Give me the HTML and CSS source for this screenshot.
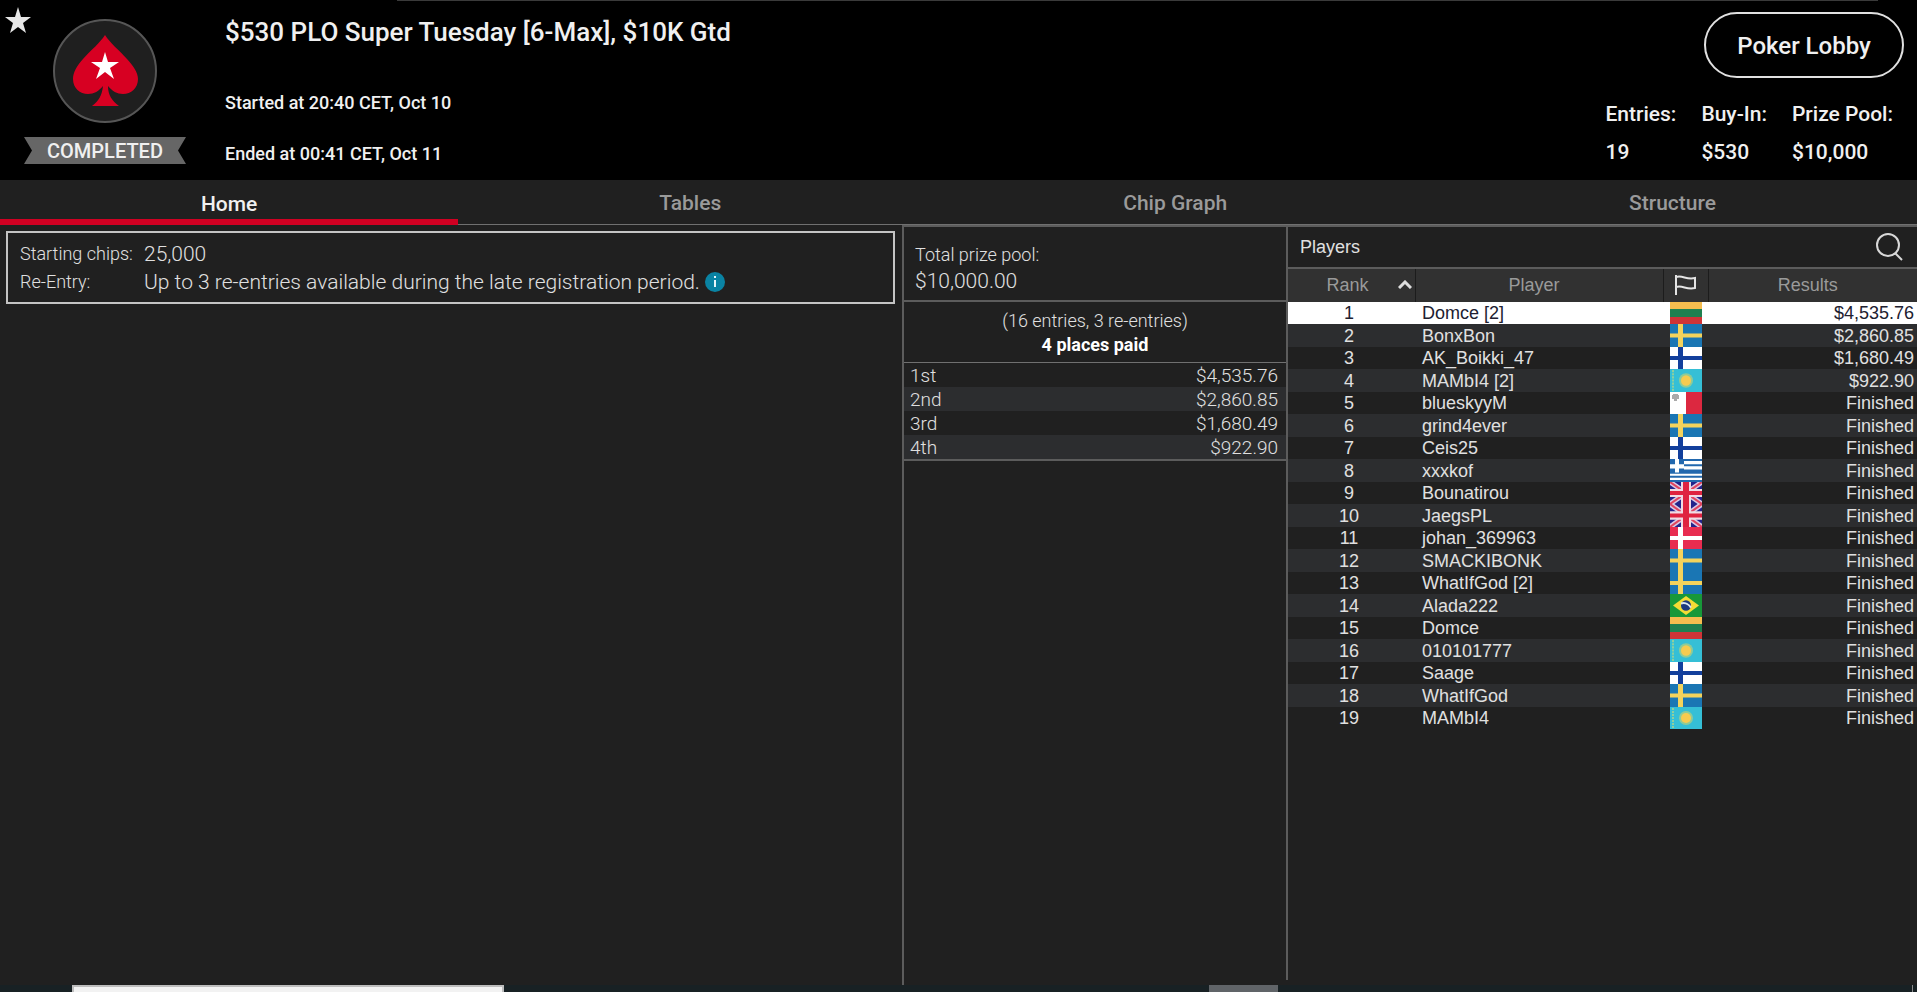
FILE: index.html
```html
<!DOCTYPE html>
<html lang="en">
<head>
<meta charset="utf-8">
<title>$530 PLO Super Tuesday [6-Max], $10K Gtd</title>
<link rel="stylesheet" href="styles.css">
</head>
<body>
<svg class="defs" aria-hidden="true">
  <symbol id="lt" viewBox="0 0 32 22" preserveAspectRatio="none"><path fill="#f5bd4f" d="M0 0h32v8H0z"/><path fill="#1f8050" d="M0 7h32v8H0z"/><path fill="#cf3437" d="M0 15h32v7H0z"/></symbol>
  <symbol id="se" viewBox="0 0 32 22" preserveAspectRatio="none"><path fill="#1a76b4" d="M0 0h32v22H0z"/><path fill="#f3d35c" d="M8 0h5v22H8zM0 9h32v4H0z"/></symbol>
  <symbol id="fi" viewBox="0 0 32 22" preserveAspectRatio="none"><path fill="#fff" d="M0 0h32v22H0z"/><path fill="#123f9c" d="M8 0h5v22H8zM0 9h32v4H0z"/></symbol>
  <symbol id="kz" viewBox="0 0 32 22" preserveAspectRatio="none"><path fill="#35bfd6" d="M0 0h32v22H0z"/><path stroke="#8fcf9e" stroke-width="2" stroke-dasharray="2 1" d="M3 1v20"/><circle cx="16" cy="11" r="7" fill="#8ecb98"/><circle cx="16" cy="11" r="5" fill="#f6cb50"/></symbol>
  <symbol id="mt" viewBox="0 0 32 22" preserveAspectRatio="none"><path fill="#fff" d="M0 0h16v22H0z"/><path fill="#dc2840" d="M16 0h16v22H16z"/><path fill="#aaa" d="M3 2h5v1h1v4H7v2H4V7H2V3h1z"/></symbol>
  <symbol id="gr" viewBox="0 0 32 22" preserveAspectRatio="none"><path fill="#2268ae" d="M0 0h32v22H0z"/><path fill="#fff" d="M14 2h18v3H14zM14 7h18v3H14zM0 14h32v2H0zM0 18h32v2H0zM5 0h4v13H5zM0 5h14v4H0z"/></symbol>
  <symbol id="gb" viewBox="0 0 32 22" preserveAspectRatio="none"><path fill="#23238a" d="M0 0h32v22H0z"/><path stroke="#d9c8e4" stroke-width="5" d="M0 0l32 22M32 0L0 22"/><path stroke="#e0445f" stroke-width="2" d="M0 0l32 22M32 0L0 22"/><path fill="#f0dbe4" d="M11 0h10v22H11zM0 7h32v8H0z"/><path fill="#df2340" d="M13 0h6v22h-6zM0 9h32v4H0z"/></symbol>
  <symbol id="dk" viewBox="0 0 32 22" preserveAspectRatio="none"><path fill="#e82c50" d="M0 0h32v22H0z"/><path fill="#fff" d="M8 0h5v22H8zM0 9h32v4H0z"/></symbol>
  <symbol id="br" viewBox="0 0 32 22" preserveAspectRatio="none"><path fill="#179839" d="M0 0h32v22H0z"/><path fill="#f3dc35" d="M16 2l13 9-13 9L3 11z"/><circle cx="16" cy="11" r="5" fill="#1d3a7e"/><path fill="none" stroke="#d9e6ee" stroke-width="2" d="M11 9c4-1 8 1 10 4"/></symbol>
</svg>

<header class="top">
  <div class="brand">
    <svg class="fav" viewBox="0 0 26 26"><path fill="#e6e6e6" d="M13 0l3 10h10l-8 6 3 10-8-6-8 6 3-10-8-6h10z"/></svg>
    <svg class="logo" viewBox="0 0 106 106"><circle cx="53" cy="53" r="51" fill="#1f1f1f" stroke="#565656" stroke-width="2"/><path fill="#d70022" d="M53 17c5 8 14 15 22 24 6 7 11 13 11 20 0 9-7 15-15 15-6 0-11-3-15-8 0 9 4 15 11 20H40c7-5 10-11 11-20-4 5-9 8-15 8-8 0-15-6-15-15 0-7 4-13 10-20 8-9 17-16 22-24z"/><path fill="#fff" d="M53 34l3 10h11l-9 6 4 11-9-7-9 7 4-11-9-6h11z"/></svg>
    <div class="ribbon">COMPLETED</div>
  </div>
  <div class="event">
    <h1>$530 PLO Super Tuesday [6-Max], $10K Gtd</h1>
    <p>Started at 20:40 CET, Oct 10</p>
    <p>Ended at 00:41 CET, Oct 11</p>
  </div>
  <div class="summary">
    <button class="lobby" type="button">Poker Lobby</button>
    <dl class="stats">
      <div><dt>Entries:</dt><dd>19</dd></div>
      <div><dt>Buy-In:</dt><dd>$530</dd></div>
      <div><dt>Prize Pool:</dt><dd>$10,000</dd></div>
    </dl>
  </div>
</header>

<nav class="tabs">
  <button type="button" class="tab active">Home</button>
  <button type="button" class="tab">Tables</button>
  <button type="button" class="tab">Chip Graph</button>
  <button type="button" class="tab">Structure</button>
</nav>

<main class="panes">
  <section class="info">
    <dl class="infobox">
      <dt>Starting chips:</dt><dd>25,000</dd>
      <dt>Re-Entry:</dt><dd>Up to 3 re-entries available during the late registration period. <svg class="tip" viewBox="0 0 20 20"><circle cx="10" cy="10" r="10" fill="#0a83a3"/><path fill="#e8f6fa" d="M9 4h2v2H9zM9 8h2v7H9z"/></svg></dd>
    </dl>
  </section>

  <section class="prizes">
    <div class="pool"><div class="pool-label">Total prize pool:</div><div class="pool-value">$10,000.00</div></div>
    <div class="places"><div>(16 entries, 3 re-entries)</div><strong>4 places paid</strong></div>
    <table class="payouts">
      <tr><td>1st</td><td>$4,535.76</td></tr>
      <tr><td>2nd</td><td>$2,860.85</td></tr>
      <tr><td>3rd</td><td>$1,680.49</td></tr>
      <tr><td>4th</td><td>$922.90</td></tr>
    </table>
  </section>

  <section class="players">
    <div class="players-bar">
      <h2>Players</h2>
      <button class="search" type="button" aria-label="Search players"><svg viewBox="0 0 28 28"><g fill="none" stroke="#d8d8d8" stroke-width="2"><circle cx="13" cy="12" r="11"/><path d="M20 20l7 7"/></g></svg></button>
    </div>
    <table class="ranking">
      <colgroup><col class="c-rank"><col class="c-player"><col class="c-flag"><col class="c-result"></colgroup>
      <thead><tr>
        <th><span class="rank-head">Rank<svg class="sort" viewBox="0 0 14 9"><path fill="none" stroke="#ddd" stroke-width="3" d="M1 8l6-6 6 6"/></svg></span></th>
        <th>Player</th>
        <th><svg class="flag-head" viewBox="0 0 22 20"><path fill="none" stroke="#e4e4e4" stroke-width="2" d="M2 0v20M2 2c7-2 10 3 19 1v10c-9 2-12-3-19-1"/></svg></th>
        <th>Results</th>
      </tr></thead>
      <tbody>
        <tr class="selected"><td>1</td><td>Domce [2]</td><td><svg class="flag"><use href="#lt"/></svg></td><td>$4,535.76</td></tr>
        <tr><td>2</td><td>BonxBon</td><td><svg class="flag"><use href="#se"/></svg></td><td>$2,860.85</td></tr>
        <tr><td>3</td><td>AK_Boikki_47</td><td><svg class="flag"><use href="#fi"/></svg></td><td>$1,680.49</td></tr>
        <tr><td>4</td><td>MAMbI4 [2]</td><td><svg class="flag"><use href="#kz"/></svg></td><td>$922.90</td></tr>
        <tr><td>5</td><td>blueskyyM</td><td><svg class="flag"><use href="#mt"/></svg></td><td>Finished</td></tr>
        <tr><td>6</td><td>grind4ever</td><td><svg class="flag"><use href="#se"/></svg></td><td>Finished</td></tr>
        <tr><td>7</td><td>Ceis25</td><td><svg class="flag"><use href="#fi"/></svg></td><td>Finished</td></tr>
        <tr><td>8</td><td>xxxkof</td><td><svg class="flag"><use href="#gr"/></svg></td><td>Finished</td></tr>
        <tr><td>9</td><td>Bounatirou</td><td><svg class="flag"><use href="#gb"/></svg></td><td>Finished</td></tr>
        <tr><td>10</td><td>JaegsPL</td><td><svg class="flag"><use href="#gb"/></svg></td><td>Finished</td></tr>
        <tr><td>11</td><td>johan_369963</td><td><svg class="flag"><use href="#dk"/></svg></td><td>Finished</td></tr>
        <tr><td>12</td><td>SMACKIBONK</td><td><svg class="flag"><use href="#se"/></svg></td><td>Finished</td></tr>
        <tr><td>13</td><td>WhatIfGod [2]</td><td><svg class="flag"><use href="#se"/></svg></td><td>Finished</td></tr>
        <tr><td>14</td><td>Alada222</td><td><svg class="flag"><use href="#br"/></svg></td><td>Finished</td></tr>
        <tr><td>15</td><td>Domce</td><td><svg class="flag"><use href="#lt"/></svg></td><td>Finished</td></tr>
        <tr><td>16</td><td>010101777</td><td><svg class="flag"><use href="#kz"/></svg></td><td>Finished</td></tr>
        <tr><td>17</td><td>Saage</td><td><svg class="flag"><use href="#fi"/></svg></td><td>Finished</td></tr>
        <tr><td>18</td><td>WhatIfGod</td><td><svg class="flag"><use href="#se"/></svg></td><td>Finished</td></tr>
        <tr><td>19</td><td>MAMbI4</td><td><svg class="flag"><use href="#kz"/></svg></td><td>Finished</td></tr>
      </tbody>
    </table>
  </section>
</main>

<footer class="dock"><span class="dock-window"></span><span class="dock-item"></span><span class="dock-end"></span></footer>
</body>
</html>
```
FILE: styles.css
```css
* { box-sizing: border-box; }
body {
  margin: 0;
  min-height: 100vh;
  display: flex;
  flex-direction: column;
  background: #202020;
  color: #e0e0e0;
  font-family: Roboto, sans-serif;
  font-size: 18px;
}
h1, h2, p, dl, dd { margin: 0; }
button { font: inherit; background: none; border: 0; padding: 0; color: inherit; }
.defs { position: absolute; width: 0; height: 0; }

/* Header */
.top {
  position: relative;
  display: flex;
  height: 180px;
  background: #000;
  color: #f0f0f0;
  font-weight: 500;
}
.top::before {
  content: "";
  position: absolute;
  top: 0;
  left: 397px;
  right: 39px;
  height: 1px;
  background: #3a3a3a;
}
.brand {
  position: relative;
  width: 225px;
  padding: 18px 0 0 24px;
}
.fav { position: absolute; left: 5px; top: 7px; width: 26px; height: 26px; }
.logo { display: block; width: 106px; height: 106px; margin-left: 28px; }
.ribbon {
  width: 162px;
  height: 27px;
  margin-top: 13px;
  background: #666;
  clip-path: polygon(0 0, 100% 0, 154px 50%, 100% 100%, 0 100%, 8px 50%);
  text-align: center;
  font-size: 20px;
  line-height: 28px;
}
.event { flex: 1; padding-top: 16px; }
.event h1 { font-size: 26px; font-weight: 500; line-height: 32px; margin-bottom: 41px; }
.event p { line-height: 27px; margin-bottom: 24px; }
.summary { display: flex; flex-direction: column; align-items: flex-end; padding: 12px 13px 0 0; }
.lobby {
  width: 200px;
  height: 66px;
  padding-top: 2px;
  border: 2px solid #e0e0e0;
  border-radius: 33px;
  font-size: 24px;
  font-weight: 500;
}
.stats { display: flex; gap: 25px; margin-right: 11px; padding-top: 22px; font-size: 21px; line-height: 28px; }
.stats dt { margin-bottom: 10px; }

/* Tabs */
.tabs { display: flex; height: 45px; font-size: 21px; font-weight: 500; color: #9a9a9a; }
.tab { flex: 1 1 auto; padding-top: 1px; border-bottom: 1px solid #707070; }
.tab.active { color: #f0f0f0; border-bottom: 6px solid #d00022; padding-top: 8px; }

/* Panes */
.panes { flex: 1; display: grid; grid-template-columns: 902fr 384fr 631fr; }
.info { padding: 6px 7px 0 6px; }
.infobox {
  display: grid;
  grid-template-columns: 124px 1fr;
  padding: 7px 12px 6px;
  border: 2px solid #c4c4c4;
  font-weight: 300;
  line-height: 28px;
}
.infobox dd { font-size: 21px; }
.tip { width: 20px; height: 20px; vertical-align: -3px; }
.prizes { border-left: 2px solid #5c5c5c; border-top: 2px solid #5c5c5c; font-weight: 300; }
.pool { height: 75px; padding: 14px 11px; border-bottom: 2px solid #5c5c5c; line-height: 27px; }
.pool-value { font-size: 21px; }
.places { height: 61px; padding: 7px 0 0; border-bottom: 1px solid #707070; text-align: center; line-height: 24px; }
.places strong { font-weight: 700; color: #fff; }
.payouts { width: 100%; border-collapse: collapse; border-bottom: 2px solid #5c5c5c; font-size: 19px; }
.payouts td { height: 24px; padding: 1px 8px 0 6px; line-height: 23px; }
.payouts tr:nth-child(even) { background: #2c2d2f; }
.payouts td + td { text-align: right; }

/* Players */
.players { border-left: 2px solid #5c5c5c; border-top: 2px solid #5c5c5c; font-family: "Liberation Sans", Arial, sans-serif; margin-bottom: 5px; }
.players-bar { display: flex; justify-content: space-between; align-items: center; height: 42px; padding: 0 14px 0 12px; border-bottom: 2px solid #5c5c5c; }
.players h2 { font-size: 18px; font-weight: 400; }
.search svg { display: block; width: 28px; height: 28px; }
.ranking { width: 100%; table-layout: fixed; border-collapse: collapse; font-size: 18px; line-height: 22px; }
.c-rank { width: 127px; }
.c-flag { width: 45px; }
.c-player { width: 248px; }
.ranking th { height: 33px; padding: 0 10px 2px 0; background: #313131; border-right: 1px solid #1c1c1c; color: #9a9a9a; font-weight: 400; }
.ranking th:nth-child(1), .ranking th:nth-child(3) { padding-right: 2px; }
.ranking th:last-child { border-right: 0; }
.rank-head { display: flex; justify-content: flex-end; align-items: center; gap: 29px; padding-right: 1px; }
.sort { width: 14px; height: 9px; }
.flag-head { display: block; width: 22px; height: 20px; margin: 0 auto; }
.ranking td { height: 22px; padding: 0; white-space: nowrap; }
.ranking tbody tr:nth-child(even) td { height: 23px; background: #2c2d2f; }
.ranking td:nth-child(1) { text-align: center; padding-right: 5px; }
.ranking td:nth-child(2) { padding-left: 7px; }
.ranking td:nth-child(4) { text-align: right; padding-right: 3px; }
.flag { display: block; width: 32px; height: 22px; margin: 0 auto; }
tr:nth-child(even) .flag { height: 23px; }
.selected { background: #fff; color: #202030; }

/* Dock strip under the window */
.dock { display: flex; height: 7px; background: #182124; }
.dock-window { width: 432px; margin-left: 72px; background: #f2f2f2; border: 2px solid #bdbdbd; border-bottom: 0; }
.dock-item { width: 69px; margin-left: 705px; background: #606468; }
.dock-end { width: 1px; margin: 0 4px 0 auto; background: #8a8a8a; }
```
